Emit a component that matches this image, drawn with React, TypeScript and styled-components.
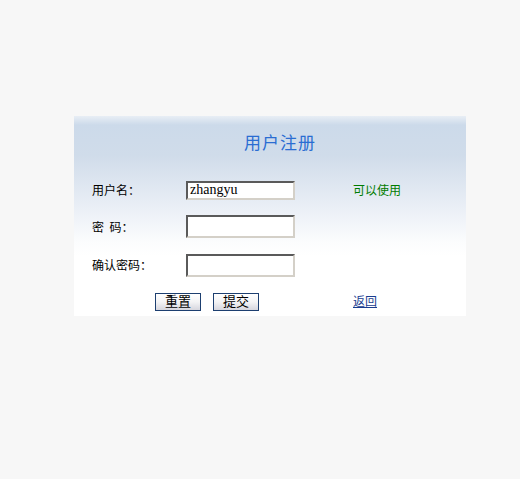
import React from 'react';
import styled, { createGlobalStyle } from 'styled-components';

const GlobalStyle = createGlobalStyle`
  html, body {
    margin: 0;
    padding: 0;
    background: #f7f7f7;
    font-family: "Noto Sans CJK SC", "Liberation Sans", sans-serif;
    font-size: 12px;
  }
`;

const Page = styled.div`
  width: 520px;
  height: 479px;
  padding: 116px 0 0 74px;
  box-sizing: border-box;
`;

const Panel = styled.form`
  width: 392px;
  height: 200px;
  display: grid;
  grid-template-columns: 112px 167px 113px;
  grid-template-rows: 54px 40px 33px 44px 29px;
  align-items: center;
  background: linear-gradient(
    to bottom,
    #e8eef5 0px,
    #ccdaea 9px,
    #d0dcea 40px,
    #dfe7f1 70px,
    #eef2f8 100px,
    #fbfcfd 125px,
    #ffffff 140px,
    #ffffff 100%
  );
`;

const Title = styled.h2`
  grid-column: 1 / -1;
  margin: 0 0 4px;
  padding-left: 20px;
  text-align: center;
  font-size: 17px;
  font-weight: normal;
  letter-spacing: 1px;
  color: #2a6dd2;
`;

const Label = styled.label`
  padding-left: 18px;
  margin-bottom: 1px;
  color: #000;
  font-size: 12px;
`;

const Field = styled.input<{ $h: number }>`
  width: 109px;
  height: ${(p) => p.$h}px;
  box-sizing: border-box;
  padding: 0 2px;
  border-style: solid;
  border-width: 2px;
  border-color: #5a5a5a #d4d0c8 #d4d0c8 #5a5a5a;
  background: #fff;
  font-family: "Liberation Serif", serif;
  font-size: 14px;
  color: #000;
  outline: none;
`;

const Hint = styled.span`
  margin-bottom: 1px;
  color: #007c00;
  font-size: 12px;
`;

const Actions = styled.div`
  grid-column: 1 / 3;
  display: flex;
  gap: 12px;
  padding-left: 81px;
`;

const Button = styled.button`
  width: 46px;
  height: 18px;
  padding: 0 0 1px;
  border: 1px solid #1d3f70;
  background: linear-gradient(to bottom, #ffffff 0%, #f3f3f5 50%, #d6d6de 100%);
  font-family: "Noto Sans CJK SC", sans-serif;
  font-size: 13px;
  line-height: 14px;
  color: #000;
`;

const BackLink = styled.a`
  display: inline-block;
  margin-bottom: 2px;
  color: #1a3d8f;
  font-size: 12px;
  text-decoration: underline;
`;

export default function App() {
  return (
    <>
      <GlobalStyle />
      <Page>
        <Panel onSubmit={(e) => e.preventDefault()}>
          <Title>用户注册</Title>

          <Label>用户名：</Label>
          <div>
            <Field $h={19} type="text" defaultValue="zhangyu" />
          </div>
          <Hint>可以使用</Hint>

          <Label>密&nbsp;&nbsp;码：</Label>
          <div>
            <Field $h={23} type="password" />
          </div>
          <span />

          <Label>确认密码：</Label>
          <div>
            <Field $h={23} type="password" />
          </div>
          <span />

          <Actions>
            <Button type="reset">重置</Button>
            <Button type="submit">提交</Button>
          </Actions>
          <div>
            <BackLink href="#">返回</BackLink>
          </div>
        </Panel>
      </Page>
    </>
  );
}
